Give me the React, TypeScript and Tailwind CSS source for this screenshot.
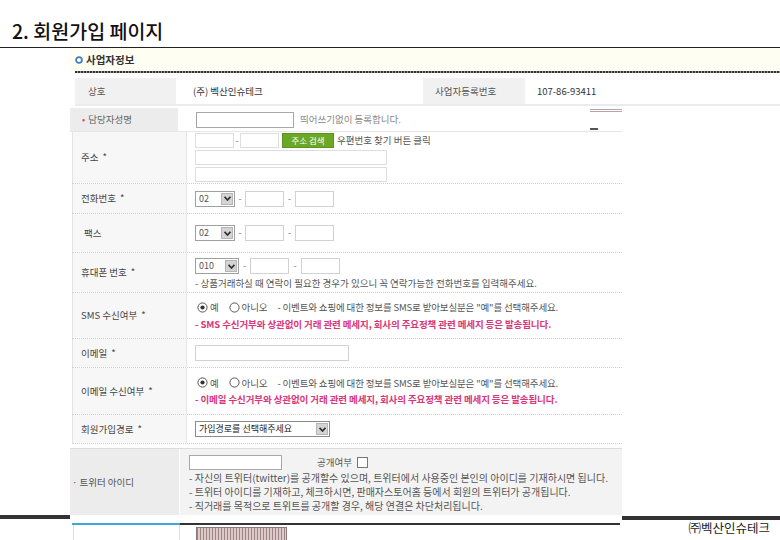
import React from 'react';

// Slide: member signup page capture (회원가입 페이지)

function Box({ className }: { className: string }) {
  return <div className={`bg-white border shrink-0 ${className}`} />;
}

function Select({ value, className }: { value: string; className: string }) {
  return (
    <div className={`flex items-stretch bg-white border border-[#a0a0a0] shrink-0 ${className}`}>
      <span className="flex-1 pl-[3px] flex items-center text-[9px] text-[#555]">{value}</span>
      <div className="w-[12px] my-[1px] mr-[1px] bg-[#d4d4d4] border border-[#b5b5b5] flex items-center justify-center">
        <svg width="7" height="5" viewBox="0 0 7 5">
          <path d="M0.6 0.8 L3.5 4 L6.4 0.8" fill="none" stroke="#333" strokeWidth="1.7" />
        </svg>
      </div>
    </div>
  );
}

function Radio({ checked }: { checked?: boolean }) {
  return (
    <svg width="11" height="11" viewBox="0 0 11 11" className="shrink-0">
      <circle cx="5.5" cy="5.5" r="4.6" fill="#fff" stroke="#555" strokeWidth="1" />
      {checked && <circle cx="5.5" cy="5.5" r="2.1" fill="#333" />}
    </svg>
  );
}

function Dash({ w }: { w: string }) {
  return <span className={`${w} text-center text-[9px] text-[#777]`}>-</span>;
}

function Label({ children, pad = 'pl-[8px]' }: { children: React.ReactNode; pad?: string }) {
  return (
    <div className={`w-[115px] shrink-0 bg-[#f7f7f7] border-l border-r border-[#e4e4e4] flex items-center ${pad} text-[9.5px] text-[#444]`}>
      {children}
    </div>
  );
}

function PhoneRow({ first, mobile }: { first: string; mobile?: boolean }) {
  return (
    <div className="flex items-center">
      <Select value={first} className={mobile ? 'w-[44px] h-[16px]' : 'w-[40px] h-[16px]'} />
      <Dash w={mobile ? 'w-[11px]' : 'w-[10px]'} />
      <Box className="w-[39px] h-[16px] border-[#d2d2d2]" />
      <Dash w={mobile ? 'w-[12px]' : 'w-[11px]'} />
      <Box className="w-[39px] h-[16px] border-[#d2d2d2]" />
    </div>
  );
}

function Consent({ red }: { red: string }) {
  return (
    <div className="flex flex-col">
      <div className="flex items-center text-[9.5px] text-[#555] tracking-[-0.15px] pl-[2px]">
        <Radio checked />
        <span className="ml-[2px]">예</span>
        <span className="ml-[10px]">
          <Radio />
        </span>
        <span className="ml-[2px]">아니오</span>
        <span className="ml-[10px]">- 이벤트와 쇼핑에 대한 정보를 SMS로 받아보실분은 "예"를 선택해주세요.</span>
      </div>
      <div className="mt-[2px] text-[9.5px] font-bold text-[#d9367a] tracking-[-0.1px]">{red}</div>
    </div>
  );
}

export default function App() {
  return (
    <div className="w-[780px] h-[540px] overflow-hidden bg-white font-['Noto_Sans_CJK_KR',sans-serif] text-[#333]">
      {/* slide title */}
      <div className="h-[47px] pl-[12px] pt-[21px]">
        <h1 className="text-[19.5px] leading-[20px] font-medium text-[#111]">2. 회원가입 페이지</h1>
      </div>
      <div className="h-px bg-[#222]" />

      {/* section header */}
      <div className="ml-[70px] h-[23px] bg-[#fffef3] flex items-center pl-[5px]">
        <svg width="8" height="8" viewBox="0 0 8 8" className="shrink-0">
          <circle cx="4" cy="4" r="2.9" fill="#fff" stroke="#3b7fc4" strokeWidth="1.8" />
        </svg>
        <span className="ml-[3px] text-[10.5px] font-bold text-[#333]">사업자정보</span>
      </div>
      <div className="ml-[75px] h-[2px] bg-[repeating-linear-gradient(90deg,#333_0px,#333_2px,#9a9a9a_2px,#9a9a9a_3px)]" />
      <div className="h-[5px]" />

      {/* 상호 row */}
      <div className="ml-[75px] h-[28px] flex border-b-2 border-[#ececec] text-[9.5px]">
        <div className="w-[101px] bg-[#f1f1f1] flex items-center pl-[13px] text-[#555]">상호</div>
        <div className="w-[247px] flex items-center pl-[17px] text-[#333]">(주) 벡산인슈테크</div>
        <div className="w-[102px] bg-[#f1f1f1] flex items-center pl-[12px] text-[#555]">사업자등록번호</div>
        <div className="flex-1 flex items-center pl-[12px] text-[#333]">107-86-93411</div>
      </div>
      <div className="h-[2px]" />

      {/* 담당자성명 */}
      <div className="ml-[70px] w-[552px] h-[24px] flex border-b border-[#e6e6e6]">
        <div className="w-[108px] bg-[#ececec] flex items-center pl-[12px] text-[9.5px] text-[#666]">
          <span className="text-[#e05050] mr-[3px]">•</span>담당자성명
        </div>
        <div className="flex-1 flex items-center pl-[18px]">
          <Box className="w-[98px] h-[16px] border-[#a8a8a8]" />
          <span className="ml-[6px] text-[9.5px] text-[#888]">띄어쓰기없이 등록합니다.</span>
        </div>
        <div className="w-[32px] flex flex-col justify-between pt-[1px] pb-[1px]">
          <div className="flex flex-col gap-[1px]">
            <div className="h-px bg-[#aaa]" />
            <div className="h-px bg-[#c9a0a0]" />
          </div>
          <div className="w-[8px] h-[2px] bg-[#555]" />
        </div>
      </div>

      {/* 주소 */}
      <div className="ml-[72px] w-[550px] h-[52px] flex border-b border-dotted border-[#cfcfcf]">
        <Label>
          주소<span className="ml-[4px]">*</span>
        </Label>
        <div className="pl-[8px] pt-[1px] flex flex-col gap-[2px]">
          <div className="flex items-center">
            <Box className="w-[39px] h-[15px] border-[#dedede]" />
            <span className="w-[6px] text-center text-[9px] text-[#777]">-</span>
            <Box className="w-[39px] h-[15px] border-[#dedede]" />
            <div className="ml-[3px] w-[52px] h-[15px] bg-[#6aa826] border border-[#5b9420] flex items-center justify-center text-[8.5px] text-white">
              주소 검색
            </div>
            <span className="ml-[3px] text-[9.5px] text-[#555]">우편번호 찾기 버튼 클릭</span>
          </div>
          <Box className="w-[192px] h-[15px] border-[#dedede]" />
          <Box className="w-[192px] h-[15px] border-[#dedede]" />
        </div>
      </div>

      {/* 전화번호 */}
      <div className="ml-[72px] w-[550px] h-[30px] flex border-b border-dotted border-[#cfcfcf]">
        <Label>
          전화번호<span className="ml-[4px]">*</span>
        </Label>
        <div className="pl-[8px] flex items-center">
          <PhoneRow first="02" />
        </div>
      </div>

      {/* 팩스 */}
      <div className="ml-[72px] w-[550px] h-[39px] flex border-b border-dotted border-[#cfcfcf]">
        <Label pad="pl-[11px]">팩스</Label>
        <div className="pl-[8px] flex items-center">
          <PhoneRow first="02" />
        </div>
      </div>

      {/* 휴대폰 번호 */}
      <div className="ml-[72px] w-[550px] h-[40px] flex border-b border-dotted border-[#cfcfcf]">
        <Label>
          휴대폰 번호<span className="ml-[4px]">*</span>
        </Label>
        <div className="pl-[8px] pt-[5px] flex flex-col gap-[2px]">
          <PhoneRow first="010" mobile />
          <span className="text-[9.5px] text-[#555]">
            - 상품거래하실 때 연락이 필요한 경우가 있으니 꼭 연락가능한 전화번호를 입력해주세요.
          </span>
        </div>
      </div>

      {/* SMS 수신여부 */}
      <div className="ml-[72px] w-[550px] h-[46px] flex border-b border-dotted border-[#cfcfcf]">
        <Label>
          SMS 수신여부<span className="ml-[4px]">*</span>
        </Label>
        <div className="pl-[8px] flex items-center">
          <Consent red="- SMS 수신거부와 상관없이 거래 관련 메세지, 회사의 주요정책 관련 메세지 등은 발송됩니다." />
        </div>
      </div>

      {/* 이메일 */}
      <div className="ml-[72px] w-[550px] h-[29px] flex border-b border-dotted border-[#cfcfcf]">
        <Label>
          이메일<span className="ml-[4px]">*</span>
        </Label>
        <div className="pl-[8px] flex items-center">
          <Box className="w-[154px] h-[16px] border-[#d2d2d2]" />
        </div>
      </div>

      {/* 이메일 수신여부 */}
      <div className="ml-[72px] w-[550px] h-[47px] flex border-b border-dotted border-[#cfcfcf]">
        <Label>
          이메일 수신여부<span className="ml-[4px]">*</span>
        </Label>
        <div className="pl-[8px] flex items-center">
          <Consent red="- 이메일 수신거부와 상관없이 거래 관련 메세지, 회사의 주요정책 관련 메세지 등은 발송됩니다." />
        </div>
      </div>

      {/* 회원가입경로 */}
      <div className="ml-[72px] w-[550px] h-[29px] flex border-b border-dotted border-[#cfcfcf]">
        <Label>
          회원가입경로<span className="ml-[4px]">*</span>
        </Label>
        <div className="pl-[8px] flex items-center">
          <div className="w-[135px] h-[16px] flex items-stretch bg-white border border-[#8a8a8a]">
            <span className="flex-1 pl-[3px] flex items-center text-[9px] text-[#222]">가입경로를 선택해주세요</span>
            <div className="w-[12px] my-[1px] mr-[1px] bg-[#d4d4d4] border border-[#b5b5b5] flex items-center justify-center">
              <svg width="7" height="5" viewBox="0 0 7 5">
                <path d="M0.6 0.8 L3.5 4 L6.4 0.8" fill="none" stroke="#333" strokeWidth="1.7" />
              </svg>
            </div>
          </div>
        </div>
      </div>
      <div className="h-[4px]" />

      {/* 트위터 아이디 */}
      <div className="ml-[70px] w-[552px] h-[67px] flex bg-[#f3f3f3] border-t border-[#dcdcdc]">
        <div className="w-[110px] bg-[#ececec] border-r border-white flex items-center pl-[2px] text-[9.5px] text-[#555]">
          · 트위터 아이디
        </div>
        <div className="pl-[9px] pt-[6px] flex flex-col">
          <div className="flex items-center">
            <Box className="w-[93px] h-[15px] border-[#a8a8a8]" />
            <span className="ml-[35px] text-[9.5px] text-[#555]">공개여부</span>
            <div className="ml-[5px] w-[11px] h-[11px] bg-white border border-[#777]" />
          </div>
          <div className="mt-[1px] flex flex-col text-[10px] leading-[14px] text-[#555]">
            <span>- 자신의 트위터(twitter)를 공개할수 있으며, 트위터에서 사용중인 본인의 아이디를 기재하시면 됩니다.</span>
            <span>- 트위터 아이디를 기재하고, 체크하시면, 판매자스토어홈 등에서 회원의 트위터가 공개됩니다.</span>
            <span>- 직거래를 목적으로 트위트를 공개할 경우, 해당 연결은 차단처리됩니다.</span>
          </div>
        </div>
      </div>

      {/* bottom strip */}
      <div className="flex">
        <div className="w-[622px] shrink-0">
          <div className="h-[8px]">
            <div className="w-[70px] h-[4px] bg-[#333]" />
          </div>
          <div className="ml-[72px] h-[2px] flex">
            <div className="w-[108px] bg-[#3aa8d8]" />
            <div className="w-[440px] bg-[#333]" />
          </div>
          <div className="ml-[73px] h-[20px] flex">
            <div className="w-[107px] border-l border-r border-[#dedede]" />
            <div className="pl-[16px] pt-[2px]">
              <div className="w-[91px] h-[18px] border border-[#8a7a7a] bg-[repeating-linear-gradient(90deg,#a08585_0px,#a08585_1px,#dccaca_1px,#dccaca_3px)]" />
            </div>
          </div>
        </div>
        <div className="flex-1 pt-[1px]">
          <div className="h-[4px] bg-[#333]" />
          <div className="pr-[10px] text-right text-[12.5px] leading-[16px] text-[#222]">㈜벡산인슈테크</div>
        </div>
      </div>
    </div>
  );
}
